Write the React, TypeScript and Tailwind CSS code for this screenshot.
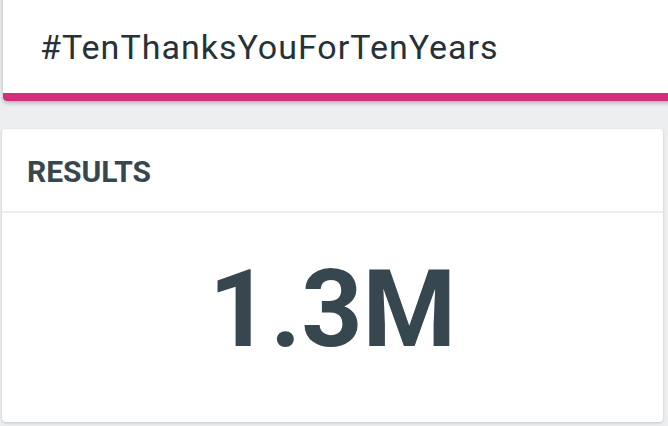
export default function App() {
  return (
    <div
      className="w-[668px] h-[426px] overflow-hidden bg-[#eceef0] flex flex-col"
      style={{ fontFamily: "Roboto, 'Liberation Sans', sans-serif" }}
    >
      {/* Hashtag header card */}
      <div className="ml-[3px] -mr-4 -mt-2 h-[109px] bg-white rounded-[4px] shadow-[0_2px_4px_rgba(0,0,0,0.25)] flex flex-col overflow-hidden">
        <div className="flex-1 flex items-center pl-[37px] pt-2">
          <span className="text-[34px] leading-none text-[#263238] tracking-[1px]">
            #TenThanksYouForTenYears
          </span>
        </div>
        <div className="h-[8px] bg-[#d42e7a]" />
      </div>

      {/* Results card */}
      <div className="mt-[28px] ml-[2px] w-[661px] h-[293px] bg-white rounded-[4px] shadow-[0_1px_3px_rgba(0,0,0,0.18)] flex flex-col">
        <div className="h-[84px] flex items-center pl-[25px] border-b-2 border-[#eceef0]">
          <span className="text-[30px] font-bold leading-none text-[#37474f] pt-[4px]">
            RESULTS
          </span>
        </div>
        <div className="flex-1 flex items-center justify-center pb-[16px]">
          <span className="text-[107px] font-bold leading-none text-[#37474f]">
            1.3M
          </span>
        </div>
      </div>
    </div>
  );
}
